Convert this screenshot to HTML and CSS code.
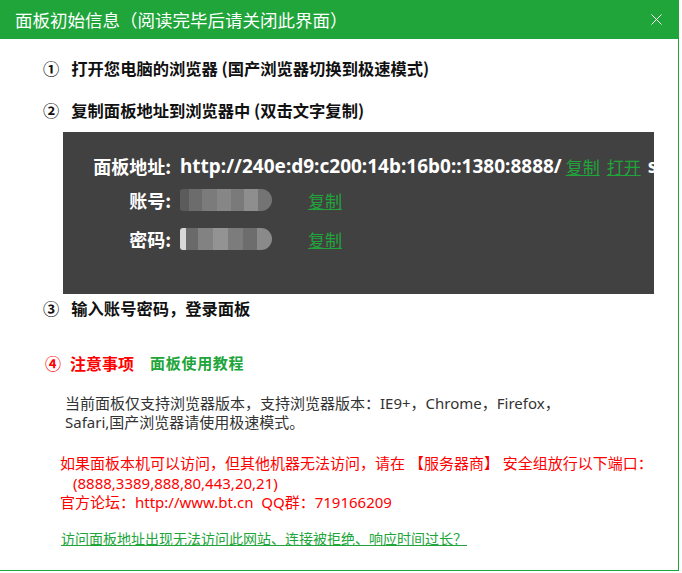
FILE: index.html
```html
<!DOCTYPE html>
<html lang="zh-CN">
<head>
    <meta charset="UTF-8">
    <title>面板初始信息</title>
    <link rel="stylesheet" href="styles.css">
</head>
<body>
    <div class="layer">
        <div class="layer-title">
            <span>面板初始信息（阅读完毕后请关闭此界面）</span>
            <span class="layer-close">
                <svg width="11" height="11" viewBox="0 0 11 11">
                    <path d="M0.5 0.5L10.5 10.5M10.5 0.5L0.5 10.5" stroke="#fff" stroke-width="1" fill="none"/>
                </svg>
            </span>
        </div>

        <div class="layer-content">
            <div class="step step-1"><span class="num">①</span>打开您电脑的浏览器 (国产浏览器切换到极速模式)</div>
            <div class="step step-2"><span class="num">②</span>复制面板地址到浏览器中 (双击文字复制)</div>

            <div class="info-box">
                <div class="info-row">
                    <span class="label">面板地址:</span>
                    <span class="value">http://240e:d9:c200:14b:16b0::1380:8888/</span>
                    <a class="copy">复制</a>
                    <a class="copy">打开</a>
                    <span class="value value-tail">s</span>
                </div>
                <div class="info-row row-user">
                    <span class="label">账号:</span>
                    <span class="secret"><span class="mosaic mosaic-a"></span></span>
                    <a class="copy">复制</a>
                </div>
                <div class="info-row row-pass">
                    <span class="label">密码:</span>
                    <span class="secret"><span class="mosaic mosaic-b"></span></span>
                    <a class="copy">复制</a>
                </div>
            </div>

            <div class="step step-3"><span class="num">③</span>输入账号密码，登录面板</div>

            <div class="notice-head">
                <span class="red"><span class="num">④</span>注意事项</span>
                <a class="tutorial">面板使用教程</a>
            </div>

            <p class="tips">当前面板仅支持浏览器版本，支持浏览器版本：IE9+，Chrome，Firefox，<br>Safari,国产浏览器请使用极速模式。</p>

            <p class="warn">如果面板本机可以访问，但其他机器无法访问，请在 【服务器商】 安全组放行以下端口：<br><span class="ports">(8888,3389,888,80,443,20,21)</span><br>官方论坛：http://www.bt.cn&nbsp; QQ群：719166209</p>

            <a class="help-link">访问面板地址出现无法访问此网站、连接被拒绝、响应时间过长？</a>
        </div>
    </div>
</body>
</html>
```

FILE: styles.css
```css
body {
    margin: 0;
    padding: 0;
    background: #fff;
    font-family: 'Noto Sans', 'Noto Sans CJK SC', sans-serif;
    color: #000;
}

.layer {
    width: 678px;
    height: 570px;
    border-right: 1px solid #20a53a;
    border-bottom: 1px solid #20a53a;
    background: #fff;
    overflow: hidden;
}

.layer-title {
    height: 39px;
    background: #20a53a;
    color: #fff;
    display: flex;
    align-items: center;
    justify-content: space-between;
    padding: 0 16px 0 15px;
    font-size: 17.5px;
    line-height: 39px;
    font-family: 'Noto Sans CJK SC', sans-serif;
}

.layer-close {
    display: flex;
    align-items: center;
}

.layer-content {
    padding: 17px 0 0 43px;
}

.step {
    font-size: 16.3px;
    font-weight: bold;
    line-height: 24px;
    font-family: 'Noto Sans CJK SC', sans-serif;
    color: #111;
}

.num {
    margin-right: 12px;
}

.step-2 {
    margin-top: 18px;
}

.info-box {
    margin: 10px 0 0 20px;
    width: 591px;
    height: 162px;
    box-sizing: border-box;
    padding-top: 21px;
    background: #414141;
    overflow: hidden;
}

.info-row {
    display: flex;
    align-items: center;
    height: 26px;
    white-space: nowrap;
    font-size: 17px;
    color: #fff;
}

.row-user {
    margin-top: 8px;
}

.row-pass {
    margin-top: 13px;
}

.label {
    width: 108px;
    text-align: right;
    font-size: 18px;
    font-weight: bold;
    font-family: 'Noto Sans CJK SC', sans-serif;
    flex-shrink: 0;
}

.value {
    margin-left: 9px;
    font-size: 19px;
    font-weight: bold;
}

.value-tail {
    margin-left: 7px;
}

.copy {
    margin-left: 4px;
    color: #20a53a;
    text-decoration: underline;
    font-family: 'Noto Sans CJK SC', sans-serif;
}

.copy + .copy {
    margin-left: 7px;
}

.secret {
    width: 128px;
    margin-left: 9px;
    flex-shrink: 0;
    display: flex;
}

.secret + .copy {
    margin-left: 0;
}

.mosaic {
    display: block;
    width: 92px;
    height: 22px;
    border-radius: 3px 11px 11px 3px;
}

.mosaic-a {
    background: linear-gradient(90deg, #5b5b5b 0 10%, #6c6c6c 10% 24%, #7b7b7b 24% 40%, #868686 40% 55%, #7a7a7a 55% 70%, #8e8e8e 70% 85%, #747474 85% 100%);
}

.mosaic-b {
    background: linear-gradient(90deg, #d8d8d8 0 6%, #6a6a6a 6% 20%, #828282 20% 36%, #939393 36% 52%, #7c7c7c 52% 68%, #6d6d6d 68% 84%, #8a8a8a 84% 100%);
}

.step-3 {
    margin-top: 2px;
}

.notice-head {
    margin-top: 31px;
    line-height: 24px;
    font-family: 'Noto Sans CJK SC', sans-serif;
    font-weight: bold;
    display: flex;
    align-items: center;
}

.red {
    color: #f00;
    font-size: 16px;
}

.notice-head .num {
    margin-left: 2px;
    margin-right: 9px;
}

.tutorial {
    margin-left: 16px;
    color: #20a53a;
    font-size: 15px;
    letter-spacing: 0.7px;
}

.tips {
    margin: 19px 0 0 22px;
    font-size: 15px;
    line-height: 19px;
    color: #333;
    font-family: 'Noto Sans', 'Noto Sans CJK SC', sans-serif;
}

.warn {
    margin: 22px 0 0 17px;
    font-size: 15px;
    line-height: 19.5px;
    color: #f00;
    font-family: 'Noto Sans', 'Noto Sans CJK SC', sans-serif;
}

.ports {
    padding-left: 13px;
}

.help-link {
    display: inline-block;
    margin: 15px 0 0 18px;
    font-size: 14px;
    line-height: 20px;
    color: #20a53a;
    text-decoration: underline;
    font-family: 'Noto Sans CJK SC', sans-serif;
}
```
